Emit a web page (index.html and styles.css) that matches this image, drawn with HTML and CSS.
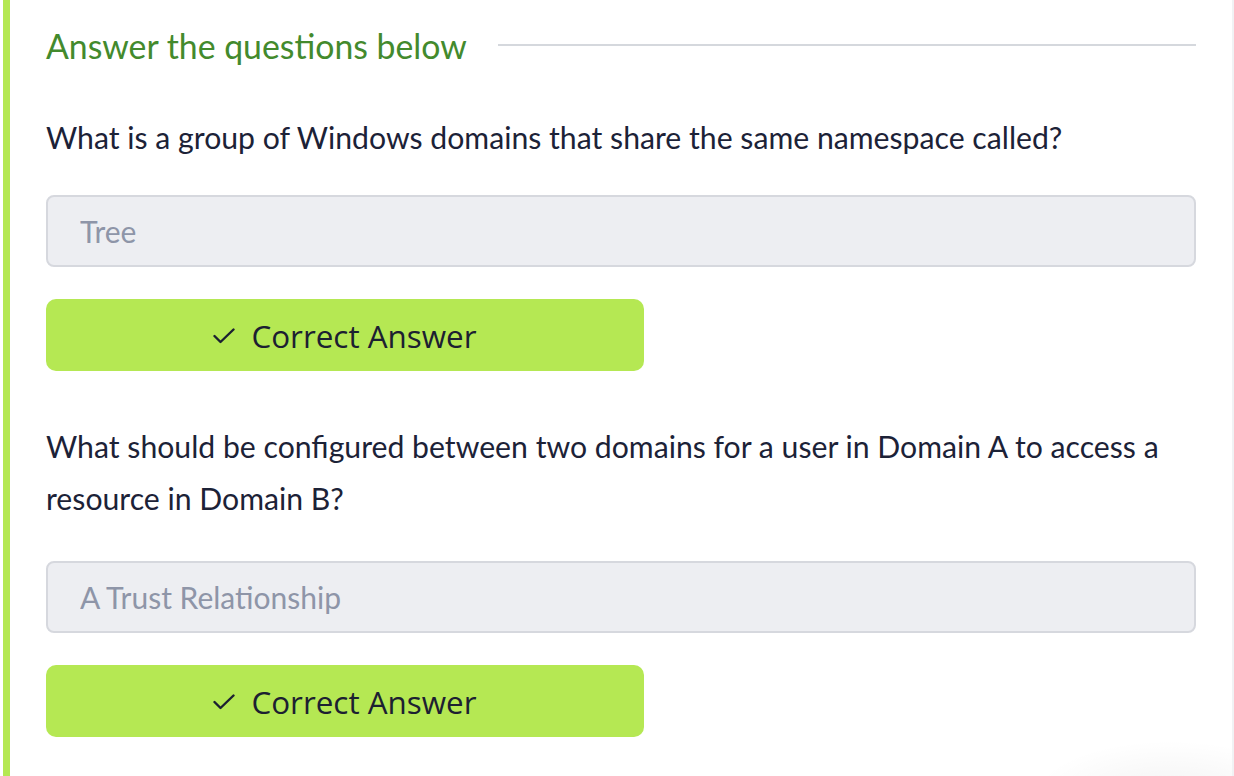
FILE: index.html
```html
<!DOCTYPE html>
<html lang="en">
<head>
<meta charset="utf-8">
<title>Answer the questions below</title>
<link rel="stylesheet" href="styles.css">
</head>
<body>
<div class="page">
  <section class="task">
    <div class="task-head">
      <h3 class="task-title">Answer the questions below</h3>
      <div class="task-rule"></div>
    </div>

    <div class="question question-first">
      <p class="question-text">What is a group of Windows domains that share the same namespace called?</p>
      <input class="answer-input" type="text" placeholder="Tree" disabled>
      <button class="answer-btn" type="button">
        <svg class="check" width="22" height="16" viewBox="0 0 22 16" aria-hidden="true"><path d="M1.5 8 L7.5 14 L20.5 1.5" fill="none" stroke="#1c2031" stroke-width="2.4" stroke-linecap="round" stroke-linejoin="round"/></svg>
        <span>Correct Answer</span>
      </button>
    </div>

    <div class="question">
      <p class="question-text">What should be configured between two domains for a user in Domain A to access a resource in Domain B?</p>
      <input class="answer-input" type="text" placeholder="A Trust Relationship" disabled>
      <button class="answer-btn" type="button">
        <svg class="check" width="22" height="16" viewBox="0 0 22 16" aria-hidden="true"><path d="M1.5 8 L7.5 14 L20.5 1.5" fill="none" stroke="#1c2031" stroke-width="2.4" stroke-linecap="round" stroke-linejoin="round"/></svg>
        <span>Correct Answer</span>
      </button>
    </div>
  </section>
</div>
</body>
</html>
```

FILE: styles.css
```css
html, body {
  margin: 0;
  padding: 0;
  background: #ffffff;
}

body {
  width: 1234px;
  height: 776px;
  overflow: hidden;
  font-family: "Lato", "Liberation Sans", sans-serif;
}

.page {
  height: 776px;
  box-sizing: border-box;
  padding-left: 3px;
  border-right: 2px solid #f1f2f4;
  background: radial-gradient(ellipse 140px 60px at 1170px 800px, rgba(0,0,0,0.05), rgba(0,0,0,0) 100%);
}

.task {
  border-left: 7px solid #b5e853;
  padding: 18px 36px 40px 36px;
  min-height: 776px;
  box-sizing: border-box;
}

.task-head {
  display: flex;
  align-items: center;
  gap: 31px;
  height: 56px;
}

.task-title {
  margin: 0;
  font-weight: 400;
  font-size: 33.8px;
  color: #438a2d;
  white-space: nowrap;
  line-height: 56px;
}

.task-rule {
  flex: 1;
  height: 2px;
  background: #d5d8dd;
  margin-top: -2px;
}

.question {
  display: flex;
  flex-direction: column;
  align-items: flex-start;
}

.question-text {
  margin: 49px 0 37px 0;
  font-size: 30.2px;
  line-height: 52px;
  color: #1c2237;
}

.question-first .question-text {
  margin: 37px 0 32px 0;
}

.answer-input {
  width: 100%;
  height: 72px;
  box-sizing: border-box;
  border: 2px solid #d6d8de;
  border-radius: 8px;
  background: #edeef2;
  padding: 0 32px;
  font-family: "Lato", "Liberation Sans", sans-serif;
  font-size: 30px;
  color: #8e95a8;
  outline: none;
}

.answer-input::placeholder {
  color: #8e95a8;
  opacity: 1;
}

.answer-btn {
  margin-top: 32px;
  width: 598px;
  height: 72px;
  border: none;
  border-radius: 10px;
  background: #b5e853;
  color: #1c2031;
  display: flex;
  align-items: center;
  justify-content: center;
  gap: 16px;
  font-family: "Open Sans", "Liberation Sans", sans-serif;
  font-size: 31.4px;
  padding: 0;
}

.check {
  display: block;
  margin-top: 2px;
}
```
